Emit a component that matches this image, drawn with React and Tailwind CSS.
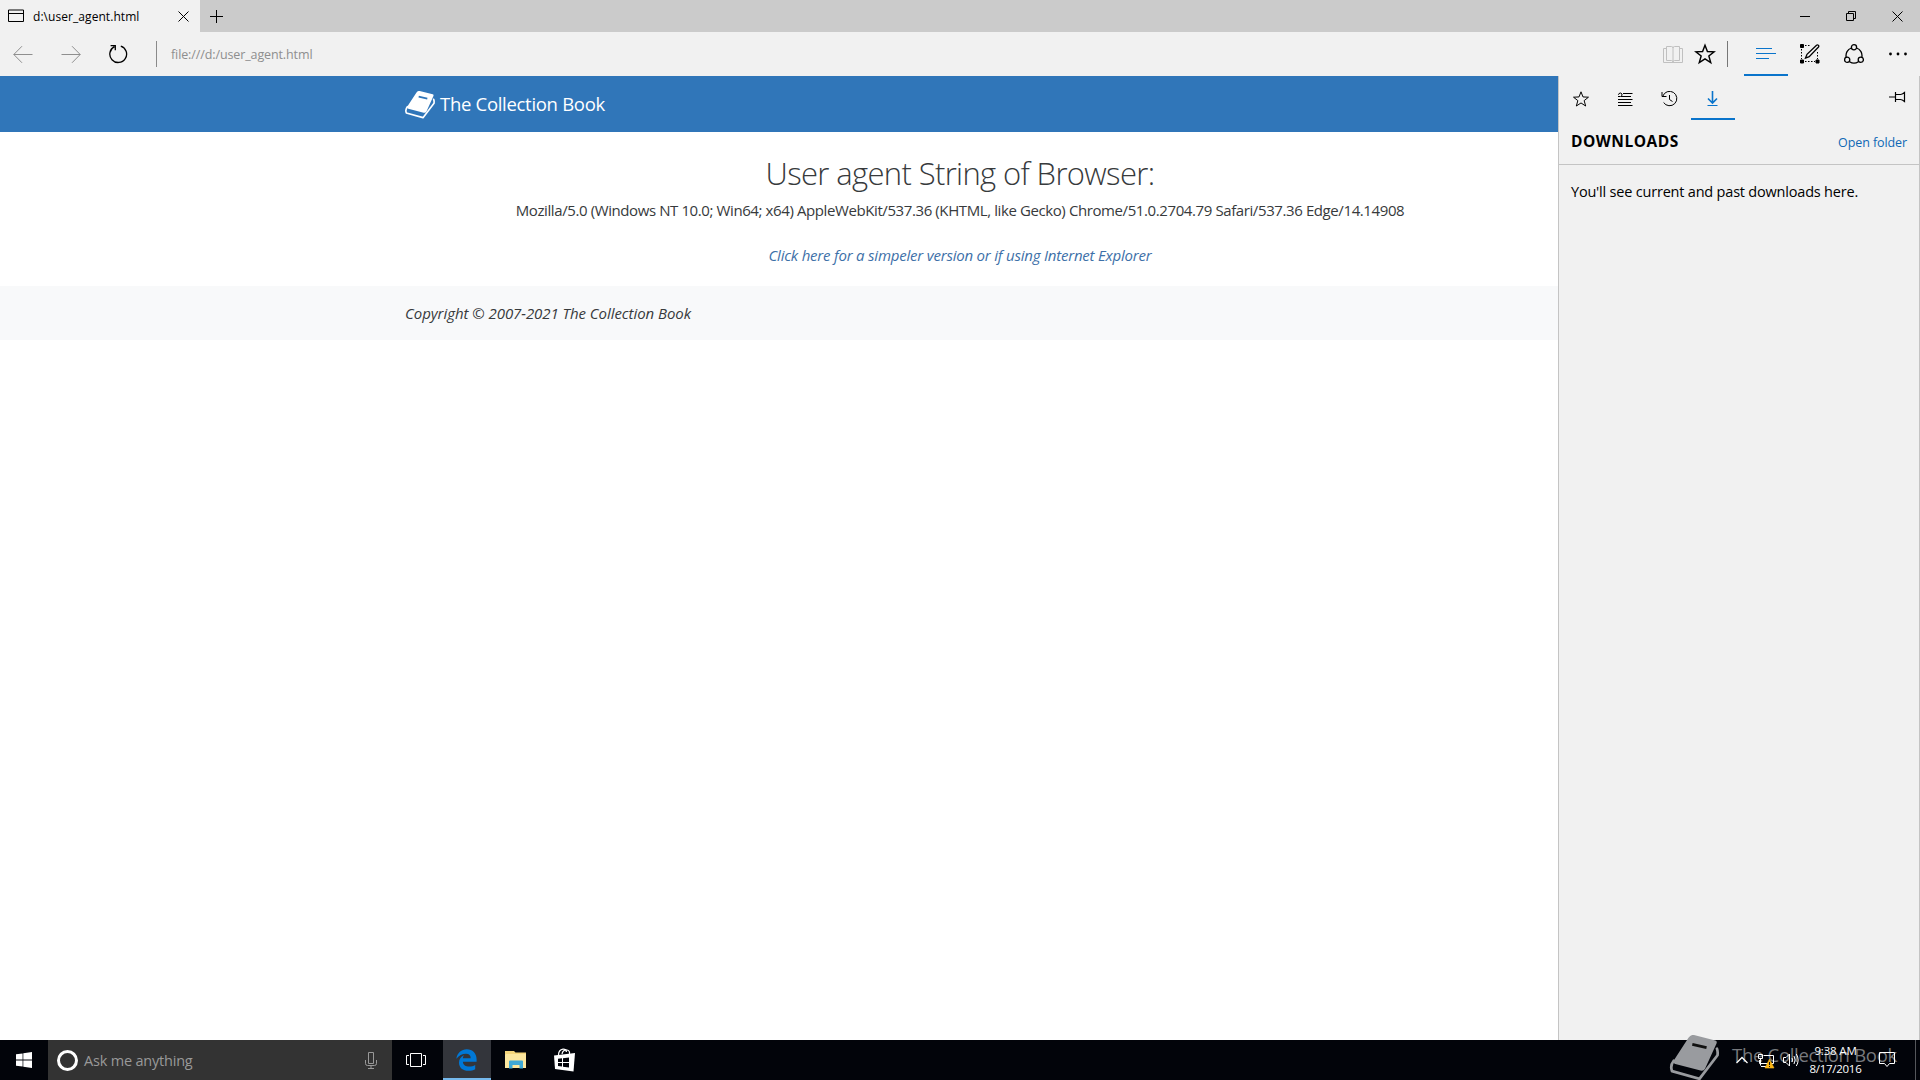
import React from "react";

function Icon({ w, h, className = "", children, sw = 1 }) {
  return (
    <svg width={w} height={h} viewBox={`0 0 ${w} ${h}`} fill="none" stroke="currentColor" strokeWidth={sw} className={`shrink-0 ${className}`}>
      {children}
    </svg>
  );
}

function BookLogo({ className, slot }) {
  return (
    <svg viewBox="0 0 90 84" className={className} fill="none">
      <path d="M44 0L83 10Q87 11 85 16L64 62Q62 66 56 65L10 53Q4 51 8 45L34 5Q38-1 44 0Z" fill="currentColor" />
      <path d="M7 47Q0 56 4 66L54 80L87 37Q88 30 86 25" stroke="currentColor" strokeWidth="5" strokeLinejoin="round" strokeLinecap="round" />
      <path d="M41 17L67 23" stroke={slot} strokeWidth="5" />
    </svg>
  );
}

function Star({ size, sw }) {
  return (
    <svg width={size} height={size} viewBox="0 0 20 20" fill="none" stroke="currentColor" strokeWidth={sw} strokeLinejoin="miter">
      <path d="M10 2L12.2 7.7L18.3 8L13.5 11.8L15.2 17.8L10 14.4L4.8 17.8L6.5 11.8L1.7 8L7.8 7.7Z" />
    </svg>
  );
}

function TitleBar() {
  return (
    <div className="flex h-8 bg-[#cbcbcb]">
      <div className="flex w-[200px] items-center bg-[#f1f1f1] pl-2 pr-[11px]">
        <Icon w={17} h={14}>
          <path d="M.5 1H15.5V12.5H.5ZM.5 4.5H15.5" />
        </Icon>
        <span className="ml-2 whitespace-nowrap pt-px text-[12px] leading-8 tracking-[0.06px]">d:\user_agent.html</span>
        <Icon w={11} h={11} className="ml-auto">
          <path d="M.5 .5L10.5 10.5M10.5 .5L.5 10.5" />
        </Icon>
      </div>
      <div className="flex w-[33px] items-center justify-center">
        <Icon w={13} h={13}>
          <path d="M6.5 0V13M0 6.5H13" />
        </Icon>
      </div>
      <div className="ml-auto flex">
        <div className="flex w-[46px] items-center justify-center">
          <Icon w={10} h={11}>
            <path d="M0 5.5H10" />
          </Icon>
        </div>
        <div className="flex w-[46px] items-center justify-center">
          <Icon w={10} h={10}>
            <path d="M.5 2.5H7.5V9.5H.5ZM2.5 2.5V.5H9.5V7.5H7.5" />
          </Icon>
        </div>
        <div className="flex w-[46px] items-center justify-center">
          <Icon w={11} h={11}>
            <path d="M.5 .5L10.5 10.5M10.5 .5L.5 10.5" />
          </Icon>
        </div>
      </div>
    </div>
  );
}

function Toolbar() {
  return (
    <div className="flex h-11 items-center bg-[#f1f1f1]">
      <div className="flex w-[45px] justify-center pt-px text-[#8f8f8f]">
        <Icon w={20} h={18}>
          <path d="M.8 8.500H19.500M9 .2L.8 8.500L9 16.800" />
        </Icon>
      </div>
      <div className="flex w-[51px] justify-center pt-px text-[#8f8f8f]">
        <Icon w={20} h={18}>
          <path d="M.5 8.500H19.200M11 .2L19.200 8.500L11 16.800" />
        </Icon>
      </div>
      <div className="flex w-[44px] justify-center">
        <Icon w={20} h={20} sw={1.3}>
          <path d="M12.8 2.1A8.4 8.4 0 1 1 6.4 2.6M2.6 1.7H7.3V6.2" />
        </Icon>
      </div>
      <div className="ml-4 h-[26px] w-px bg-[#8a8a8a]" />
      <span className="ml-[14px] whitespace-nowrap pt-0.5 text-[12.5px] leading-none tracking-[-0.11px] text-[#8e8e8e]">file:///d:/user_agent.html</span>
      <div className="ml-auto flex h-full items-center">
        <div className="flex w-8 justify-center text-[#c0c0c0]">
          <Icon w={20} h={19}>
            <path d="M3.500 1.500H8.500Q10 1.500 10 3Q10 1.500 11.500 1.500H16.500V15.500H11.500Q10 15.500 10 17Q10 15.500 8.500 15.500H3.500ZM10 3V16.500M3.500 3.500H.5V17.500H19.500V3.500H16.500" />
          </Icon>
        </div>
        <div className="flex w-8 justify-center">
          <Star size={22} sw={1.3} />
        </div>
        <div className="ml-1.5 mr-4 h-[26px] w-px bg-[#777]" />
        <div className="flex h-full w-11 flex-col items-center border-b-2 border-[#0a74cb] pt-[15px] text-[#0a74cb]">
          <Icon w={20} h={12}>
            <path d="M0 1.500H16M0 6.500H20M0 11.500H13" />
          </Icon>
        </div>
        <div className="flex w-11 justify-center">
          <Icon w={20} h={20}>
            <path d="M1.500 5V15M17.500 8V15M5 17.500H15M5 1.500H11" strokeDasharray="1.500 1.500" />
            <path d="M.5 .5H3.500V3.500H.5ZM.5 16H3.500V19H.5ZM16 16H19V19H16Z" fill="currentColor" />
            <path d="M5.500 14L7 10.300L16.500 1.200Q17.600 .4 18.500 1.400Q19.200 2.300 18.300 3.300L9.200 12.600Z" strokeWidth="1.300" />
          </Icon>
        </div>
        <div className="flex w-11 justify-center">
          <Icon w={20} h={20} sw={1.3}>
            <circle cx="10" cy="3.300" r="2.600" />
            <circle cx="3.200" cy="15.800" r="2.600" />
            <circle cx="16.800" cy="15.800" r="2.600" />
            <path d="M7.400 4A8 8 0 0 0 2.200 13.300M12.600 4A8 8 0 0 1 17.800 13.300M5.600 17.700A8 8 0 0 0 14.400 17.700" />
          </Icon>
        </div>
        <div className="flex w-11 justify-center">
          <svg width="20" height="4" viewBox="0 0 20 4">
            <circle cx="2.500" cy="2" r="1.400" />
            <circle cx="10" cy="2" r="1.400" />
            <circle cx="17.500" cy="2" r="1.400" />
          </svg>
        </div>
      </div>
    </div>
  );
}

function Page() {
  return (
    <main className="w-[1558px] shrink-0 overflow-hidden bg-white">
      <div className="w-[1920px] text-[#373a3c]">
        <div className="flex h-14 items-center bg-[#3076b9] pl-[405px] text-white">
          <BookLogo className="mt-0.5 h-7 w-[30px]" slot="#3076b9" />
          <span className="ml-[5px] whitespace-nowrap text-[18.5px] tracking-[-0.3px]">The Collection Book</span>
        </div>
        <div className="flex h-[154px] flex-col items-center pt-[21px]">
          <h1 className="text-[31px] font-light leading-10 tracking-[-0.64px]">User agent String of Browser:</h1>
          <p className="mt-[5px] whitespace-nowrap text-[15px] leading-6 tracking-[-0.4px]">
            Mozilla/5.0 (Windows NT 10.0; Win64; x64) AppleWebKit/537.36 (KHTML, like Gecko) Chrome/51.0.2704.79 Safari/537.36 Edge/14.14908
          </p>
          <a className="mt-[21px] whitespace-nowrap text-[15px] italic leading-6 tracking-[-0.21px] text-[#3d70a8]">
            Click here for a simpeler version or if using Internet Explorer
          </a>
        </div>
        <footer className="flex h-[54px] items-center bg-[#f8f9fa] pl-[405px] text-[15px] italic tracking-[-0.06px]">Copyright © 2007-2021 The Collection Book</footer>
      </div>
    </main>
  );
}

function Panel() {
  return (
    <aside className="flex flex-1 flex-col border-x border-[#c4c4c4] bg-[#f1f1f1]">
      <div className="flex h-11">
        <div className="flex w-11 items-center justify-center pt-0.5">
          <Star size={18} sw={1.1} />
        </div>
        <div className="flex w-11 items-center justify-center pt-0.5">
          <Icon w={16} h={14}>
            <path d="M6 1.500H15.500M4 4.500H14M1 7.500H15.500M1 10.500H14M1 13.500H15.500M1 4.500H3.500Q5.500 4 5 2Q4 .3 2 1.500Q1 2.500 2 3" />
          </Icon>
        </div>
        <div className="flex w-11 items-center justify-center pt-0.5">
          <Icon w={17} h={16}>
            <path d="M1.800 5.200A7.200 7.200 0 1 1 2.600 11.500M1 1V5.500H5.500M8.500 4V8.500L11.500 10.500" />
          </Icon>
        </div>
        <div className="flex w-11 items-center justify-center border-b-2 border-[#0a74cb] pr-px pt-[3px] text-[#0a74cb]">
          <Icon w={11} h={16} sw={1.6}>
            <path d="M5.500 0V12M1 7.500L5.500 12L10 7.500" />
            <path d="M.5 14.500H10.500" strokeWidth="1" />
          </Icon>
        </div>
        <div className="ml-auto mr-[13px] flex items-center pb-0.5">
          <Icon w={17} h={12}>
            <path d="M0 6H6M6.500 1V11M6.500 3.500H11.500Q13 3.500 15.500 1.500V10.500Q13 8.500 11.500 8.500H6.500" strokeWidth="1.200" />
          </Icon>
        </div>
      </div>
      <div className="flex h-[45px] items-center justify-between border-b border-[#c4c4c4] pl-3 pr-3">
        <h2 className="text-[15.5px] font-bold tracking-[0.5px]">DOWNLOADS</h2>
        <a className="pt-[3px] text-[12.5px] tracking-[-0.09px] text-[#0f68b5]">Open folder</a>
      </div>
      <p className="mt-4 whitespace-nowrap pl-3 text-[14.500px] leading-[21px] tracking-[-0.2px]">You'll see current and past downloads here.</p>
    </aside>
  );
}

function Taskbar() {
  return (
    <div className="relative flex h-10 bg-[#02040a] text-white">
      <div className="flex w-12 items-center justify-center">
        <svg width="16" height="16" viewBox="0 0 16 16" fill="#fff">
          <path d="M0 2.300L6.600 1.400V7.600H0ZM7.300 1.300L16 0V7.600H7.300ZM0 8.400H6.600V14.600L0 13.700ZM7.300 8.400H16V16L7.300 14.700Z" />
        </svg>
      </div>
      <div className="flex w-[344px] items-center bg-[#333] pl-[9px] pr-[15px]">
        <div className="size-[21px] rounded-full border-[3px] border-white" />
        <span className="ml-[6px] pt-0.5 text-[14.500px] leading-none tracking-[-0.2px] text-[#999]">Ask me anything</span>
        <Icon w={12} h={17} className="ml-auto text-[#999]">
          <path d="M3.500 .5H8.500V11.500H3.500ZM.5 8V11.500Q.5 13.500 2.500 13.500H9.500Q11.500 13.500 11.500 11.500V8M6 13.500V16M3 16.500H9" />
        </Icon>
      </div>
      <div className="flex w-[51px] items-center justify-center pr-[3px]">
        <Icon w={20} h={14}>
          <path d="M4.500 .5H15.500V13.500H4.500ZM3 2.500H.5V11.500H3M17 2.500H19.500V11.500H17" />
        </Icon>
      </div>
      <div className="flex w-12 items-center justify-center border-b-2 border-[#76b9ed] bg-[#33353b] pr-px pt-0.5">
        <svg width="21" height="22" viewBox="0 0 21 22" fill="#0078d7">
          <path d="M.3 9.800C1.200 4 5.500 .3 10.800 .3C16.500 .3 20.600 4.300 20.600 10.300V12.700H6.900C7.100 16 9.800 17.600 13.200 17.600C15.500 17.600 17.500 17 19.200 15.900V20.300C17.300 21.300 15 21.800 12.500 21.800C6.800 21.800 3 18.600 3 13.700C3 10.300 4.800 7.600 8 6.200C7.200 7.200 6.900 8.300 6.800 9.200H14.700C14.700 6.200 13.200 4.700 10 4.700C6.200 4.700 2.800 6.500 .3 9.800Z" />
        </svg>
      </div>
      <div className="flex w-[49px] items-center justify-center">
        <svg width="22" height="18" viewBox="0 0 22 18">
          <path d="M0 0H9L10.500 1.500H21V17H0Z" fill="#f5d67b" />
          <path d="M1 3H21V17H0V4Z" fill="#fce79f" />
          <path d="M4 10.500Q4 9.500 5 9.500H17Q18 9.500 18 10.500V17.500H14.500V14H7.500V17.500H4Z" fill="#3fa9d6" />
        </svg>
      </div>
      <div className="flex w-[50px] items-center justify-center">
        <svg width="22" height="24" viewBox="0 0 22 24">
          <path d="M4.500 7Q4.500 2 9 1.200Q12 1 12.500 4M8 6Q9 1.500 13 2Q16 2.500 15.500 6" fill="none" stroke="#fff" strokeWidth="1.200" />
          <path d="M0 7.500L21 5L19.500 23.500L1 21Z" fill="#fff" />
          <path d="M4 10.800L8 10.300V14H4ZM9 10.200L15 9.500V14H9ZM4 15H8V18.500L4 18ZM9 15H15V19.500L9 18.700Z" fill="#02040a" />
        </svg>
      </div>
      {/* Watermark overlaid on the notification area */}
      <div className="absolute -top-[7px] left-[1669px] flex items-center text-[#77797d]">
        <BookLogo className="mt-0.5 h-[46px] w-[51px] text-[#999b9f]" slot="#111" />
        <span className="-mt-2 ml-3 whitespace-nowrap pt-1 text-[18.500px] leading-10 tracking-[-0.3px]">The Collection Book</span>
      </div>
      <div className="relative ml-auto flex items-center">
        <Icon w={12} h={8} className="mr-[10px]">
          <path d="M.5 7L6 1.500L11.500 7" strokeWidth="1.300" />
        </Icon>
        <svg width="17" height="15" viewBox="0 0 17 15" className="mr-2 mt-0.5" fill="none" stroke="#fff">
          <path d="M5.500 1.500H15.500V9.500H1.500V6M.5 .5H4.500V4.500H.5ZM2.500 4.500V11.500M3 12.500H8" />
          <path d="M11.500 5L16 14H7Z" fill="#fbb615" stroke="#fbb615" strokeWidth=".6" />
          <path d="M11.500 8V11M11.500 12V13" stroke="#111" />
        </svg>
        <Icon w={17} h={14} className="mr-[9px]">
          <path d="M.5 4.500H3L6.500 1V13L3 9.500H.5ZM9 5Q10 7 9 9M11 3Q13.300 7 11 11M13.300 1Q17 7 13.300 13" />
        </Icon>
        <div className="mr-[17px] flex w-[53px] flex-col items-center whitespace-nowrap text-[11.500px] leading-[18px]">
          <span className="tracking-[-0.18px]">9:38 AM</span>
          <span className="tracking-[-0.28px]">8/17/2016</span>
        </div>
        <Icon w={17} h={16} className="mr-[19px]">
          <path d="M.5 .5H15.500V11.500H10.500L8 14.500L5.500 11.500H.5Z" />
        </Icon>
        <div className="mr-1 h-10 w-px bg-[#55575b]" />
      </div>
    </div>
  );
}

export default function App() {
  return (
    <div className="flex h-[1080px] w-[1920px] flex-col overflow-hidden bg-white font-['Open_Sans','Noto_Sans',sans-serif] text-black">
      <TitleBar />
      <Toolbar />
      <div className="flex min-h-0 flex-1">
        <Page />
        <Panel />
      </div>
      <Taskbar />
    </div>
  );
}
